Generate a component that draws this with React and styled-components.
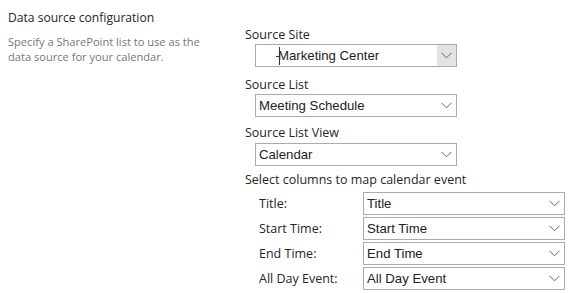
import React from 'react'
import styled, { createGlobalStyle } from 'styled-components'

const GlobalStyle = createGlobalStyle`
  body {
    margin: 0;
    background: #fff;
    font-family: "Open Sans", "Noto Sans", sans-serif;
  }
`

const Page = styled.div`
  display: flex;
  width: 571px;
  height: 293px;
  overflow: hidden;
  padding: 9px 0 0 8px;
  box-sizing: border-box;
`

const Intro = styled.div`
  width: 237px;
  flex-shrink: 0;
`

const Heading = styled.div`
  font-size: 12.1px;
  color: #262626;
  line-height: 18px;
`

const Description = styled.div`
  margin-top: 7px;
  font-size: 11.1px;
  color: #777;
  line-height: 15px;
  width: 200px;
`

const Form = styled.div`
  display: flex;
  flex-direction: column;
  padding-top: 17px;
`

const Field = styled.div`
  display: flex;
  flex-direction: column;
  margin-bottom: ${p => p.gap || 0}px;
`

const Label = styled.div`
  font-size: 12.5px;
  color: #262626;
  line-height: 17px;
  margin-bottom: ${p => p.space || 2}px;
`

const SelectBox = styled.div`
  position: relative;
  display: flex;
  align-items: center;
  width: 202px;
  height: 23px;
  box-sizing: border-box;
  margin-left: ${p => p.indent || 0}px;
  border: 1px solid #ababab;
  background: #fff;
  font-family: "Liberation Sans", Arial, sans-serif;
  font-size: 13.2px;
  color: #222;
`

const Value = styled.span`
  flex: 1;
  padding-left: ${p => p.pad || 3}px;
  white-space: nowrap;
`

const Arrow = styled.span`
  display: flex;
  align-items: center;
  justify-content: center;
  width: 19px;
  height: 100%;
  background: ${p => (p.hover ? '#e3e3e3' : 'transparent')};
`

const Cursor = styled.svg`
  position: absolute;
  left: 20px;
  top: 2px;
`

const MapGroup = styled.div`
  display: flex;
  flex-direction: column;
  gap: 2px;
  padding-left: 14px;
`

const MapRow = styled.div`
  display: flex;
  align-items: center;
`

const MapLabel = styled.div`
  width: 104px;
  font-size: 12.5px;
  color: #262626;
`

const Chevron = () => (
  <svg width="11" height="7" viewBox="0 0 11 7">
    <path d="M0.5 0.8 L5.5 5.8 L10.5 0.8" fill="none" stroke="#666" strokeWidth="1" />
  </svg>
)

const Select = ({ value, indent, pad, hover, cursor }) => (
  <SelectBox indent={indent}>
    {cursor && (
      <Cursor width="7" height="18" viewBox="0 0 7 18">
        <path d="M3.5 0 V18 M0 9.5 H3" stroke="#333" strokeWidth="1" fill="none" />
      </Cursor>
    )}
    <Value pad={pad}>{value}</Value>
    <Arrow hover={hover}>
      <Chevron />
    </Arrow>
  </SelectBox>
)

const mappings = [
  ['Title:', 'Title'],
  ['Start Time:', 'Start Time'],
  ['End Time:', 'End Time'],
  ['All Day Event:', 'All Day Event'],
]

export default function App() {
  return (
    <>
      <GlobalStyle />
      <Page>
        <Intro>
          <Heading>Data source configuration</Heading>
          <Description>
            Specify a SharePoint list to use as the data source for your calendar.
          </Description>
        </Intro>
        <Form>
          <Field gap={9}>
            <Label space={1}>Source Site</Label>
            <Select value="Marketing Center" indent={10} pad={22} hover cursor />
          </Field>
          <Field gap={7}>
            <Label space={1}>Source List</Label>
            <Select value="Meeting Schedule" indent={10} />
          </Field>
          <Field gap={5}>
            <Label space={2}>Source List View</Label>
            <Select value="Calendar" indent={10} />
          </Field>
          <Field>
            <Label space={4}>Select columns to map calendar event</Label>
            <MapGroup>
              {mappings.map(([label, value]) => (
                <MapRow key={label}>
                  <MapLabel>{label}</MapLabel>
                  <Select value={value} />
                </MapRow>
              ))}
            </MapGroup>
          </Field>
        </Form>
      </Page>
    </>
  )
}
